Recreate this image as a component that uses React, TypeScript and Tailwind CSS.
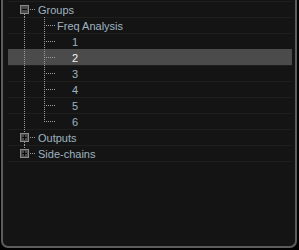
type Kind = "top" | "child" | "leaf"

type Row = {
  label: string
  kind: Kind
  box?: "minus" | "plus"
  up?: boolean // vertical line at level 1 above box
  down?: boolean // vertical line at level 1 below box
  v2?: "full" | "half" | "none"
  selected?: boolean
}

const rows: Row[] = [
  { label: "Groups", kind: "top", box: "minus", up: false, down: true },
  { label: "Freq Analysis", kind: "child", v2: "full" },
  { label: "1", kind: "leaf", v2: "full" },
  { label: "2", kind: "leaf", v2: "full", selected: true },
  { label: "3", kind: "leaf", v2: "full" },
  { label: "4", kind: "leaf", v2: "full" },
  { label: "5", kind: "leaf", v2: "full" },
  { label: "6", kind: "leaf", v2: "half" },
  { label: "Outputs", kind: "top", box: "plus", up: true, down: true },
  { label: "Side-chains", kind: "top", box: "plus", up: true, down: false },
]

const DOT = "#9a9a9a"

function Connectors({ row }: { row: Row }) {
  const w = row.kind === "top" ? 30 : row.kind === "child" ? 49 : 64
  return (
    <svg width={w} height={16} className="-mt-px shrink-0" shapeRendering="crispEdges">
      {row.kind === "top" ? (
        <>
          {row.up && <line x1={16.5} y1={0} x2={16.5} y2={4} stroke={DOT} strokeDasharray="1 1" />}
          {row.down && <line x1={16.5} y1={13} x2={16.5} y2={16} stroke={DOT} strokeDasharray="1 1" />}
          <rect x={12.5} y={4.5} width={8} height={8} fill="#4a4a4a" stroke="#8a8a8a" />
          <line x1={14} y1={8.5} x2={19} y2={8.5} stroke="#0a0a0a" />
          {row.box === "plus" && <line x1={16.5} y1={6} x2={16.5} y2={11} stroke="#0a0a0a" />}
          <line x1={22} y1={8.5} x2={28} y2={8.5} stroke={DOT} strokeDasharray="1 1" />
        </>
      ) : (
        <>
          <line x1={16.5} y1={0} x2={16.5} y2={16} stroke={DOT} strokeDasharray="1 1" />
          <line
            x1={36.5}
            y1={0}
            x2={36.5}
            y2={row.v2 === "half" ? 9 : 16}
            stroke={DOT}
            strokeDasharray="1 1"
          />
          <line x1={38} y1={8.5} x2={48} y2={8.5} stroke={DOT} strokeDasharray="1 1" />
        </>
      )}
    </svg>
  )
}

export default function App() {
  return (
    <div className="w-[299px] h-[250px] bg-black pl-px pr-[2px] pb-[2px]">
      <div
        className="h-full border-2 border-t-0 border-[#5c5c5c] rounded-b-[7px] bg-[#141414] pl-[5px] pr-[3px] pt-px"
        style={{ fontFamily: '"Liberation Sans", Arial, sans-serif' }}
      >
        {rows.map((row) => (
          <div
            key={row.label}
            className={
              "flex h-4 items-start border-t text-[11px] leading-[15px] " +
              (row.selected
                ? "bg-[#4b4b4b] border-[#4b4b4b] text-[#f4f4f4]"
                : "border-[#1e1e1e] text-[#9fb3c0]")
            }
          >
            <Connectors row={row} />
            <span className="whitespace-nowrap pt-px">{row.label}</span>
          </div>
        ))}
        <div className="border-t border-[#1e1e1e]" />
      </div>
    </div>
  )
}
